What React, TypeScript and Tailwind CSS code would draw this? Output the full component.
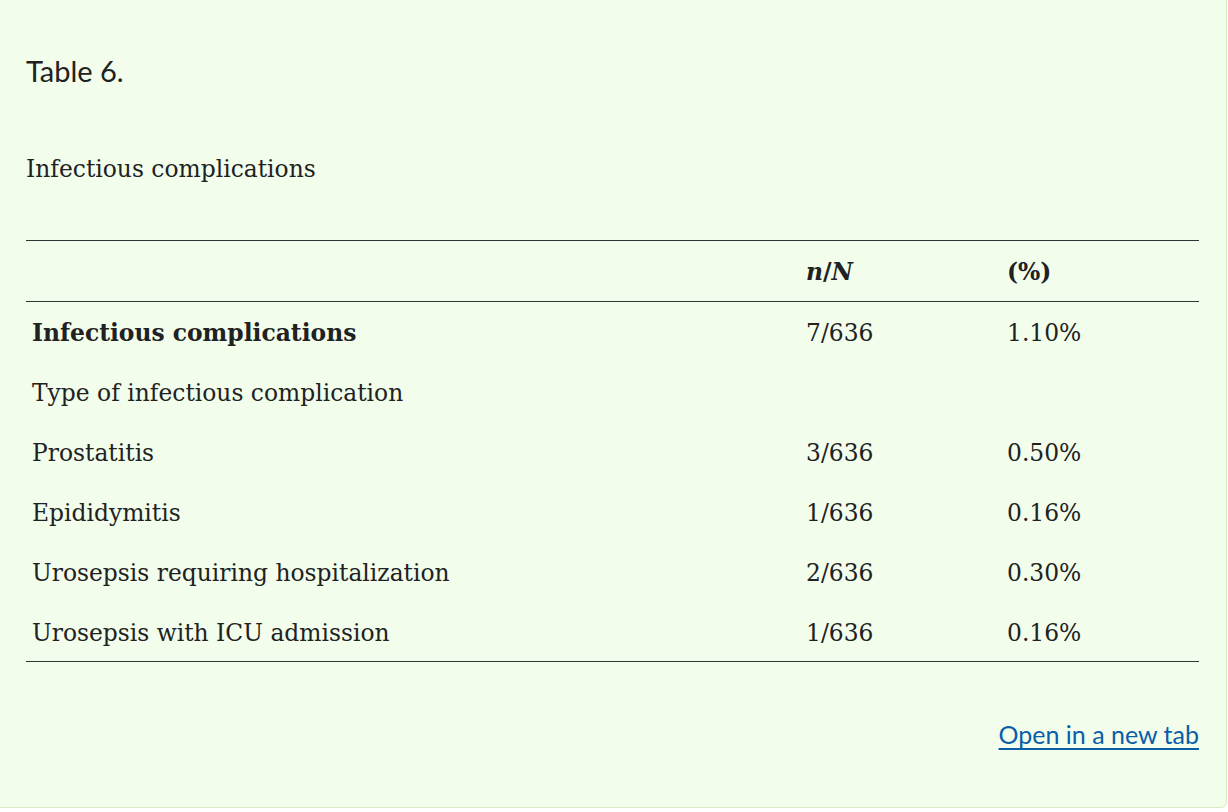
const rows = [
  { label: "Infectious complications", n: "7/636", pct: "1.10%", bold: true },
  { label: "Type of infectious complication", n: "", pct: "" },
  { label: "Prostatitis", n: "3/636", pct: "0.50%" },
  { label: "Epididymitis", n: "1/636", pct: "0.16%" },
  { label: "Urosepsis requiring hospitalization", n: "2/636", pct: "0.30%" },
  { label: "Urosepsis with ICU admission", n: "1/636", pct: "0.16%" },
];

const serif = "font-['DejaVu_Serif',serif]";

export default function App() {
  return (
    <div className="w-[1228px] h-[812px] overflow-hidden bg-white">
      <div className="ml-[-10px] mt-[-10px] w-[1237px] h-[818px] bg-[#f2fdec] border border-[#d4ecbf] rounded-md pl-[35px] pr-[27px] pt-[10px]">
        <h3 className="font-['Lato',sans-serif] text-[29px] leading-none text-[#212121] mt-[55px]">
          Table 6.
        </h3>
        <p className={`${serif} text-[23.4px] text-[#212121] mt-[73px] leading-none`}>
          Infectious complications
        </p>
        <table className={`${serif} w-full mt-[59px] text-[23.4px] text-[#212121] border-collapse`}>
          <thead>
            <tr className="border-t border-b border-[#333]">
              <th className="h-[61px] pt-[3px] text-left font-normal w-[774px]"></th>
              <th className="h-[61px] pt-[3px] text-left font-bold px-[6px] w-[201px]">
                <i>n</i>/<i>N</i>
              </th>
              <th className="h-[61px] pt-[3px] text-left font-bold px-[6px]">(%)</th>
            </tr>
          </thead>
          <tbody className="border-b border-[#333]">
            {rows.map((r) => (
              <tr key={r.label}>
                <td className={`h-[60px] pt-[3px] px-[6px] ${r.bold ? "font-bold" : ""}`}>{r.label}</td>
                <td className="h-[60px] pt-[3px] px-[6px]">{r.n}</td>
                <td className="h-[60px] pt-[3px] px-[6px]">{r.pct}</td>
              </tr>
            ))}
          </tbody>
        </table>
        <div className="flex justify-end mt-[60px]">
          <a href="#" className="font-['Lato',sans-serif] text-[25px] leading-none text-[#0a5ea8] underline underline-offset-4">
            Open in a new tab
          </a>
        </div>
      </div>
    </div>
  );
}
